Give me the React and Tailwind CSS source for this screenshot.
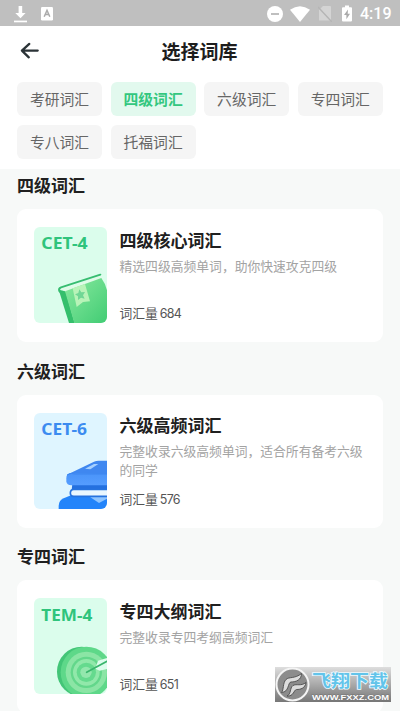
import React, { useState } from 'react';
import clsx from 'clsx';

const CATEGORIES = ['考研词汇', '四级词汇', '六级词汇', '专四词汇', '专八词汇', '托福词汇'];

const CoverLabel = ({ children, color, width }) => (
    <text
        x="49"
        y="103"
        fontSize="48"
        fontWeight="700"
        fill={color}
        textLength={width}
        lengthAdjust="spacingAndGlyphs"
        className="font-['Noto_Sans',sans-serif]"
    >
        {children}
    </text>
);

const Cet4Cover = () => (
    <svg viewBox="27 36 219 288" className="w-full h-full">
        <defs>
            <linearGradient id="bookFront" x1="0" y1="0" x2="1" y2="1">
                <stop offset="0" stopColor="#8aeaa0" />
                <stop offset="1" stopColor="#42cc74" />
            </linearGradient>
        </defs>
        <CoverLabel color="#2fc47c" width="139">CET-4</CoverLabel>
        <path d="M101 224 L122 229 L149 324 H132 Z" fill="#35bf6c" />
        <path d="M108 222 L226 184 L234 190 L122 230 Z" fill="#dffbe7" />
        <path d="M120 229 L229 189 Q241 205 246 226 V324 H148 Z" fill="url(#bookFront)" />
        <path d="M226 179 L108 217 Q100 220 103 228 L107 232" fill="none" stroke="#37bd70" strokeWidth="6" strokeLinecap="round" strokeLinejoin="round" />
        <path d="M143 220 L180 207 L195 259 L174 261 L155 276 Z" fill="#b8f3b8" />
        <path d="M163 223 L169 232 L180 231 L174 241 L179 251 L168 248 L159 255 L159 244 L150 238 L160 234 Z" fill="#70d795" />
    </svg>
);

const Cet6Cover = () => (
    <svg viewBox="27 38 219 288" className="w-full h-full">
        <defs>
            <linearGradient id="bookTop" x1="0" y1="0" x2="0" y2="1">
                <stop offset="0" stopColor="#4a94f9" />
                <stop offset="1" stopColor="#559dff" />
            </linearGradient>
        </defs>
        <g transform="translate(0 2)">
            <CoverLabel color="#3c8bf0" width="137">CET-6</CoverLabel>
        </g>
        <path d="M142 250 H246 V270 H140 Z" fill="#2470df" />
        <path d="M101 326 V316 Q102 300 116 294 L140 284 H246 V326 Z" fill="#2384fa" />
        <path d="M194 289 H246 V295 L222 308 Z" fill="#8fc5ff" />
        <path d="M246 267 H146 Q136 268 136 278 Q136 288 146 288 H246 Z" fill="#e9f7ff" />
        <path d="M246 267 H146 Q136 268 136 278 Q136 288 146 288 H246" fill="none" stroke="#2673df" strokeWidth="5" />
        <path d="M132 220 L207 184 Q213 181 221 181 H246 V226 H132 Z" fill="#3f87f0" />
        <path d="M133 219 Q124 222 124 234 V243 Q125 255 139 255 H246 V221 Z" fill="url(#bookTop)" />
        <path d="M126 224 Q138 216 151 221 H246" fill="none" stroke="#3c86ef" strokeWidth="3" />
        <path d="M180 205 L207 191 H220 L196 207 Z" fill="#a6d0ff" />
    </svg>
);

const Tem4Cover = () => (
    <svg viewBox="27 24 219 288" className="w-full h-full">
        <g transform="translate(0 -11)">
            <CoverLabel color="#2fc47c" width="153">TEM-4</CoverLabel>
        </g>
        <ellipse cx="170" cy="245" rx="74" ry="75" fill="#43c577" />
        <ellipse cx="184" cy="247" rx="77" ry="77" fill="#5ed889" />
        <circle cx="184" cy="247" r="62" fill="#8be5a5" />
        <circle cx="184" cy="247" r="47" fill="#63d78b" />
        <circle cx="184" cy="247" r="40" fill="#91e8aa" />
        <circle cx="184" cy="247" r="29" fill="#65da8e" />
        <circle cx="183" cy="247" r="17" fill="#93e7ad" />
        <path d="M211 236 L219 212 L246 204 V237 L224 242 Z" fill="#dcfdec" />
        <path d="M185 247 L246 214" stroke="#39b56c" strokeWidth="5" strokeLinecap="round" />
    </svg>
);

const SECTIONS = [
    { name: '四级词汇', title: '四级核心词汇', desc: '精选四级高频单词，助你快速攻克四级', count: 684, Cover: Cet4Cover, bg: 'bg-[#dbfdec]' },
    { name: '六级词汇', title: '六级高频词汇', desc: '完整收录六级高频单词，适合所有备考六级的同学', count: 576, Cover: Cet6Cover, bg: 'bg-[#dff5ff]' },
    { name: '专四词汇', title: '专四大纲词汇', desc: '完整收录专四考纲高频词汇', count: 651, Cover: Tem4Cover, bg: 'bg-[#dbfdec]' },
];

const StatusBar = () => (
    <div className="h-[26px] shrink-0 bg-[#bfbfbf] flex items-center pt-px pl-[14px] pr-[9px] text-white">
        <svg width="13" height="18" viewBox="0 0 13 18" fill="currentColor">
            <path d="M4.6 1h3.6v7h3.4l-5.1 5.2L1.300 8h3.300z" />
            <path d="M0 15.600h13v1.700H0z" />
        </svg>
        <svg width="12" height="14" viewBox="0 0 12 14" className="ml-[14px]">
            <rect width="12" height="13.500" rx="1.200" fill="#fff" />
            <path d="M3.200 9.700 6 3.300 8.800 9.700M4.200 7.500h3.600" fill="none" stroke="#aaa" strokeWidth="1.500" />
        </svg>

        <div className="ml-auto flex items-center">
            <svg width="16" height="16" viewBox="0 0 16 16">
                <circle cx="8" cy="8" r="8" fill="#fff" />
                <path d="M4 8h8" stroke="#aaa" strokeWidth="1.500" />
            </svg>
            <svg width="20" height="16" viewBox="0 0 20 16" className="ml-[7px]">
                <path d="M0 3.700Q10-3.300 20 3.700L10 16z" fill="#fff" />
            </svg>
            <svg width="14" height="17" viewBox="0 0 14 17" className="ml-[8px]">
                <path d="M5 1h7q1 0 1 1v13.500H1V5z" fill="#d4d4d4" />
                <path d="M0 2 14 17" stroke="#b5b5b5" strokeWidth="1.500" />
            </svg>
            <svg width="10" height="17" viewBox="0 0 10 17" className="ml-[10px]">
                <path d="M3 .5h4v1.700h2q1 0 1 1v12.300q0 1-1 1H1q-1 0-1-1V3.200q0-1 1-1h2z" fill="#fff" />
                <path d="M6 4.500 2 10h2.400v4.300L8 8.700H5.700z" fill="#aaa" />
            </svg>
            <span className="ml-[8px] mt-px w-[31px] text-[16px] leading-none font-medium font-[Roboto,sans-serif] whitespace-nowrap">4:19</span>
        </div>
    </div>
);

const WordCard = ({ book }) => {
    const { Cover } = book;
    return (
        <div className="h-[133px] bg-white rounded-[9px] pl-[17px] pt-[18px] pr-[17px] flex gap-[12.500px]">
            <div className={clsx('w-[73px] h-[96px] shrink-0 rounded-[6px] overflow-hidden', book.bg)}>
                <Cover />
            </div>
            <div className="flex-1 h-[96px] flex flex-col">
                <h3 className="mt-[0.500px] text-[17px] leading-6 font-bold text-[#202020]">{book.title}</h3>
                <p className="mt-[5px] text-[12.800px] leading-[18.500px] text-[#a3a3a3]">{book.desc}</p>
                <p className="mt-auto text-[12.800px] leading-[18px] text-[#555]">
                    词汇量 <span className="-ml-px text-[12.500px] tracking-[-0.700px] font-[Inter,sans-serif]">{book.count}</span>
                </p>
            </div>
        </div>
    );
};

const Watermark = () => (
    <div className="absolute left-[275px] top-[667px] w-[116px] h-[35px] bg-linear-to-b from-[#dedede] to-[#777777] flex">
        <svg width="36" height="35" viewBox="0 0 36 35" className="shrink-0">
            <circle cx="17.500" cy="17.500" r="16" fill="#8c8c8c" stroke="#f4f4f4" strokeWidth="2" />
            <path d="M6.500 25.500C9 23 7.500 16 11 12.500C14 9.500 20 12 26.500 6.500C26.500 13 21 15 16 15C12.500 15.500 14.500 25 6.500 25.500Z" fill="#dcdcdc" stroke="#4c4c4c" strokeWidth=".9" />
            <path d="M12 29C16.500 27 14.500 21 18 18.500C21.500 16.500 26 19.500 31 15.500C30 21.500 25.500 22.500 21.500 22.500C18.500 23 19 29.500 12 29Z" fill="#dcdcdc" stroke="#4c4c4c" strokeWidth=".9" />
        </svg>
        <div className="flex flex-col">
            <svg width="80" height="25" viewBox="0 0 80 25">
                <text x="1" y="19.800" fontSize="17" fontWeight="700" fill="#62c4ea" stroke="#eefaff" strokeWidth="1.600" paintOrder="stroke" textLength="76" lengthAdjust="spacingAndGlyphs" className="font-['Noto_Sans_CJK_SC',sans-serif]">飞翔下载</text>
            </svg>
            <svg width="80" height="10" viewBox="0 0 80 10">
                <text x="1" y="7.500" fontSize="7.500" fontWeight="700" fill="#fff" stroke="#777" strokeWidth=".8" paintOrder="stroke" textLength="77" lengthAdjust="spacingAndGlyphs" className="font-['Liberation_Sans',sans-serif]">WWW.FXXZ.COM</text>
            </svg>
        </div>
    </div>
);

const App = () => {
    const [active, setActive] = useState('四级词汇');

    return (
        <div className="relative w-full h-[711px] overflow-hidden flex flex-col bg-[#f7f9f8] font-['Noto_Sans_CJK_SC',sans-serif]">
            <StatusBar />

            <div className="h-[143px] shrink-0 bg-white">
                <header className="h-[49px] flex items-center pl-[20px] pr-[40px]">
                    <svg width="19" height="18" viewBox="0 0 19 18" fill="none" stroke="#2b3337" strokeWidth="2.300" strokeLinecap="round" strokeLinejoin="round">
                        <path d="M9.300 1.900 1.900 8.600 8.800 15.300M1.900 8.600h15.800" />
                    </svg>
                    <h1 className="flex-1 text-center text-[19px] leading-7 font-bold text-[#1d1d1d]">选择词库</h1>
                </header>

                {/* Category chips */}
                <div className="pt-[7px] px-[17px] flex flex-wrap gap-x-[8.600px] gap-y-[9px]">
                    {CATEGORIES.map((name) => (
                        <button
                            key={name}
                            onClick={() => setActive(name)}
                            className={clsx(
                                'w-[85px] h-[34px] rounded-[6px] text-[14.800px] leading-none',
                                name === active ? 'bg-[#e2f9ee] text-[#34c77f] font-bold' : 'bg-[#f5f5f5] text-[#666]'
                            )}
                        >
                            {name}
                        </button>
                    ))}
                </div>
            </div>

            <main className="px-[17px] pt-[4px]">
                {SECTIONS.map((book) => (
                    <section key={book.name} className="h-[185.500px]">
                        <h2 className="h-[36px] text-[17px] leading-6 font-bold text-[#202020]">{book.name}</h2>
                        <WordCard book={book} />
                    </section>
                ))}
            </main>

            <Watermark />
        </div>
    );
};

export default App;
